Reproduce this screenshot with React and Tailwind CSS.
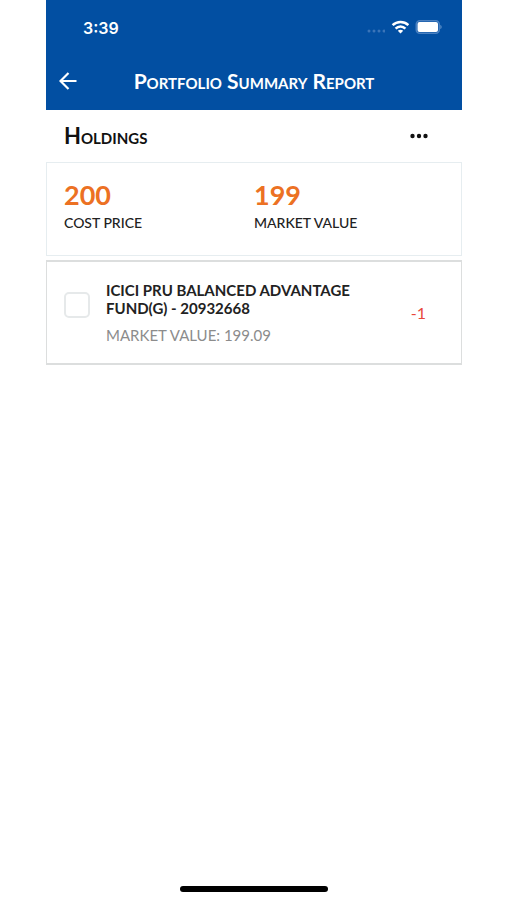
import { useState } from 'react';

const totals = [
  { label: 'COST PRICE', value: '200' },
  { label: 'MARKET VALUE', value: '199' },
];

const holdings = [
  {
    id: '20932668',
    name: 'ICICI PRU BALANCED ADVANTAGE FUND(G) - 20932668',
    marketValue: '199.09',
    change: '-1',
  },
];

function StatusBar() {
  return (
    <div className="flex h-14 items-center justify-between pl-[37px] pr-5 font-['Inter',sans-serif]">
      <span className="text-base font-semibold leading-6">3:39</span>
      <div className="flex items-center gap-1.5 pb-0.5">
        <svg width="19" height="4" viewBox="0 0 19 4" className="mt-2" fill="#3a74b8" aria-hidden="true">
          <circle cx="3" cy="2" r="1.5" />
          <circle cx="8" cy="2" r="1.5" />
          <circle cx="13" cy="2" r="1.5" />
          <circle cx="18" cy="2" r="1.5" />
        </svg>
        <svg width="18" height="14" viewBox="0 0 18 14" fill="none" stroke="white" strokeWidth="2.5" aria-hidden="true">
          <path d="M1.6 5.2C6 0.9 13 0.9 17.4 5.2" />
          <path d="M4.6 8.6C7.4 5.7 11.6 5.7 14.4 8.6" />
          <path d="M9.5 13.4L6.8 10.8C8.3 9.3 10.7 9.3 12.2 10.8Z" fill="white" stroke="none" />
        </svg>
        <svg width="27" height="14" viewBox="0 0 27 14" fill="none" aria-hidden="true">
          <rect x="1.25" y="0.75" width="23" height="12.5" rx="3.5" stroke="#4a80c0" strokeWidth="1.5" />
          <rect x="2.5" y="2" width="20.5" height="10" rx="2" fill="white" />
          <path d="M25.4 4.8C27 5.5 27 8.5 25.4 9.2Z" fill="#6796cb" />
        </svg>
      </div>
    </div>
  );
}

export default function App() {
  const [selected, setSelected] = useState([]);

  const toggle = (id) => {
    setSelected(selected.includes(id) ? selected.filter((s) => s !== id) : [...selected, id]);
  };

  return (
    <div className="flex min-h-screen flex-col bg-white pl-[46px] pr-[45px] font-['Lato',sans-serif] text-[#222]">
      <header className="bg-[#024fa2] text-white">
        <StatusBar />
        <div className="grid h-[54px] grid-cols-[44px_1fr_44px] items-center pb-1">
          <button type="button" aria-label="Back" className="flex h-11 items-center justify-center">
            <svg width="18" height="18" viewBox="0 0 18 18" fill="none" stroke="white" strokeWidth="2.2" aria-hidden="true">
              <path d="M17.5 9H2M9.5 1L1.5 9L9.5 17" />
            </svg>
          </button>
          <h1 className="text-center text-[21px] font-bold leading-7 [font-variant:small-caps]">
            Portfolio Summary Report
          </h1>
        </div>
      </header>

      <main>
        <div className="flex h-[52px] items-center justify-between pl-[18px] pr-[33px]">
          <h2 className="text-[22px] font-bold leading-7 text-[#111] [font-variant:small-caps]">Holdings</h2>
          <button type="button" aria-label="More options" className="flex h-8 items-center">
            <svg width="20" height="6" viewBox="0 0 20 6" fill="#111" aria-hidden="true">
              <circle cx="3.5" cy="3" r="2.2" />
              <circle cx="10" cy="3" r="2.2" />
              <circle cx="16.5" cy="3" r="2.2" />
            </svg>
          </button>
        </div>

        <section className="grid grid-cols-[190px_1fr] border border-[#e6edf0] px-[17px] pb-[22px] pt-4">
          {totals.map((t) => (
            <div key={t.label} className="flex flex-col gap-0.5">
              <p className="text-[27px] font-bold leading-8 text-[#ec7123]">{t.value}</p>
              <p className="text-sm font-medium leading-5">{t.label}</p>
            </div>
          ))}
        </section>

        <ul className="mt-1">
          {holdings.map((h) => (
            <li key={h.id} className="flex items-center border-x border-b-2 border-t-2 border-[#dcdede] pb-[18px] pl-[17px] pr-[35px] pt-[19px]">
              <input
                id={h.id}
                type="checkbox"
                checked={selected.includes(h.id)}
                onChange={() => toggle(h.id)}
                className="mb-4 size-[26px] shrink-0 appearance-none rounded-[5px] border-2 border-[#e6e9ea] bg-white checked:bg-[#024fa2]"
              />
              <label htmlFor={h.id} className="ml-4 w-[270px]">
                <span className="block text-[15px] font-bold leading-[18px]">{h.name}</span>
                <span className="mt-2 block text-[15px] leading-5 text-[#8c8c8c]">MARKET VALUE: {h.marketValue}</span>
              </label>
              <span className="ml-auto text-base leading-5 text-[#e8473c]">{h.change}</span>
            </li>
          ))}
        </ul>
      </main>

      <div className="mx-auto mb-2 mt-auto h-[6px] w-[148px] rounded-full bg-black" />
    </div>
  );
}
